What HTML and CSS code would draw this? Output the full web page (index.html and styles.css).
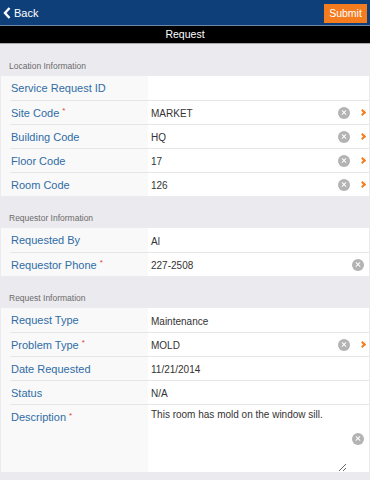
FILE: index.html
```html
<!DOCTYPE html>
<html lang="en">
    <head>
        <meta charset="UTF-8" />
        <meta name="viewport" content="width=device-width, initial-scale=1.0" />
        <title>Request</title>
        <link rel="stylesheet" href="styles.css">
    </head>
    <body>
        <header class="top-bar">
            <button type="button" class="back-button">
                <svg class="back-icon" width="8" height="12" viewBox="0 0 8 12">
                    <path d="M6.5 1 L2 6 L6.5 11" fill="none" stroke="#fff" stroke-width="2.4" />
                </svg>
                Back
            </button>
            <button type="button" class="submit-button">Submit</button>
        </header>
        <div class="title-bar">Request</div>

        <main class="content">
            <div class="section-title">Location Information</div>
            <div class="field-list">
                <div class="field">
                    <div class="field-label">Service Request ID</div>
                    <div class="field-value"></div>
                </div>
                <div class="field">
                    <div class="field-label">Site Code <span class="required">*</span></div>
                    <div class="field-value">
                        <span class="value-text">MARKET</span>
                        <span class="clear-icon"></span>
                        <span class="more-icon"></span>
                    </div>
                </div>
                <div class="field">
                    <div class="field-label">Building Code</div>
                    <div class="field-value">
                        <span class="value-text">HQ</span>
                        <span class="clear-icon"></span>
                        <span class="more-icon"></span>
                    </div>
                </div>
                <div class="field">
                    <div class="field-label">Floor Code</div>
                    <div class="field-value">
                        <span class="value-text">17</span>
                        <span class="clear-icon"></span>
                        <span class="more-icon"></span>
                    </div>
                </div>
                <div class="field">
                    <div class="field-label">Room Code</div>
                    <div class="field-value">
                        <span class="value-text">126</span>
                        <span class="clear-icon"></span>
                        <span class="more-icon"></span>
                    </div>
                </div>
            </div>

            <div class="section-title">Requestor Information</div>
            <div class="field-list">
                <div class="field">
                    <div class="field-label">Requested By</div>
                    <div class="field-value">
                        <span class="value-text">Al</span>
                    </div>
                </div>
                <div class="field">
                    <div class="field-label">Requestor Phone <span class="required">*</span></div>
                    <div class="field-value">
                        <span class="value-text">227-2508</span>
                        <span class="clear-icon solo"></span>
                    </div>
                </div>
            </div>

            <div class="section-title">Request Information</div>
            <div class="field-list">
                <div class="field">
                    <div class="field-label">Request Type</div>
                    <div class="field-value">
                        <span class="value-text">Maintenance</span>
                    </div>
                </div>
                <div class="field">
                    <div class="field-label">Problem Type <span class="required">*</span></div>
                    <div class="field-value">
                        <span class="value-text">MOLD</span>
                        <span class="clear-icon"></span>
                        <span class="more-icon"></span>
                    </div>
                </div>
                <div class="field">
                    <div class="field-label">Date Requested</div>
                    <div class="field-value">
                        <span class="value-text">11/21/2014</span>
                    </div>
                </div>
                <div class="field">
                    <div class="field-label">Status</div>
                    <div class="field-value">
                        <span class="value-text">N/A</span>
                    </div>
                </div>
                <div class="field field-tall">
                    <div class="field-label">Description <span class="required">*</span></div>
                    <div class="field-value">
                        <textarea class="value-area">This room has mold on the window sill.</textarea>
                        <span class="clear-icon solo"></span>
                    </div>
                </div>
            </div>
        </main>
    </body>
</html>
```

FILE: styles.css
```css
* {
    box-sizing: border-box;
    padding: 0;
    margin: 0;
}

body {
    background-color: #ebeaef;
    font-family: "Liberation Sans", Arial, sans-serif;
    width: 370px;
    height: 480px;
    overflow: hidden;
}

.top-bar {
    background-color: #0f3f78;
    height: 26px;
    border-bottom: 1px solid #6f88aa;
    display: flex;
    justify-content: space-between;
    align-items: center;
    padding: 0 3px 0 3px;
}

.back-button {
    background: none;
    border: none;
    color: white;
    font-family: inherit;
    font-size: 11px;
    display: flex;
    align-items: center;
    gap: 3px;
    margin-top: 1px;
}

.submit-button {
    background-color: #f57b1f;
    border: none;
    color: white;
    font-family: inherit;
    font-size: 10.5px;
    width: 43px;
    height: 19px;
    margin-top: 1px;
}

.title-bar {
    background-color: #000;
    color: white;
    font-size: 10.5px;
    height: 18px;
    line-height: 16px;
    text-align: center;
    border-bottom: 1px solid #a9a9a9;
}

.section-title {
    height: 32px;
    font-size: 8.5px;
    color: #6b6b6b;
    padding: 0 0 5px 9px;
    display: flex;
    align-items: flex-end;
}

.field-list {
    margin: 0 1px;
    background: linear-gradient(to right, #f9f9f9 147px, #fff 147px);
}

.field {
    margin-left: 9px;
    height: 24px;
    display: grid;
    grid-template-columns: 138px 1fr;
    border-top: 1px solid #e6e6e6;
}

.field:first-child {
    border-top: none;
}

.field-tall {
    height: 68px;
}

.field-label {
    font-size: 11px;
    color: #2f6ca6;
    display: flex;
    align-items: center;
    padding-left: 1px;
}

.required {
    color: #e53935;
    font-size: 8px;
    margin-left: 3px;
    align-self: center;
    margin-top: -4px;
}

.field-value {
    display: flex;
    align-items: center;
    padding-left: 3px;
    font-size: 10px;
    color: #333;
}

.value-text {
    flex: 1;
    padding-top: 2px;
}

.field-tall .field-label {
    align-items: flex-start;
    padding-top: 6px;
}

.field-tall .required {
    align-self: flex-start;
    margin-top: 0;
}

.value-area {
    flex: 1;
    align-self: stretch;
    border: none;
    background: transparent;
    font-family: inherit;
    font-size: 10px;
    color: #333;
    padding-top: 4px;
    outline: none;
    margin-right: 5px;
}

.clear-icon {
    width: 12px;
    height: 12px;
    border-radius: 50%;
    background-color: #b3b3b3;
    position: relative;
    flex-shrink: 0;
}

.clear-icon::before,
.clear-icon::after {
    content: "";
    position: absolute;
    left: 3px;
    top: 5.5px;
    width: 6px;
    height: 1.3px;
    background-color: white;
    transform: rotate(45deg);
}

.clear-icon::after {
    transform: rotate(-45deg);
}

.clear-icon.solo {
    margin-right: 5px;
}

.more-icon {
    width: 5px;
    height: 5px;
    border-top: 2px solid #f57b1f;
    border-right: 2px solid #f57b1f;
    transform: rotate(45deg);
    margin: 0 4px 0 10px;
    flex-shrink: 0;
}
```
